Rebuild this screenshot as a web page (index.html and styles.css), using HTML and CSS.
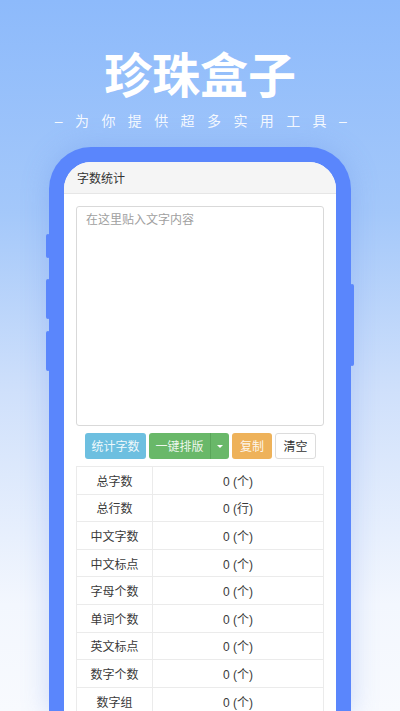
FILE: index.html
```html
<!DOCTYPE html>
<html lang="zh">
<head>
<meta charset="utf-8">
<link rel="stylesheet" href="styles.css">
</head>
<body>
<div class="page">
  <header class="hero">
    <h1 class="title">珍珠盒子</h1>
    <p class="subtitle"><span class="dash">–</span>为你提供超多实用工具<span class="dash">–</span></p>
  </header>
  <div class="phone">
    <span class="side-btn l1"></span>
    <span class="side-btn l2"></span>
    <span class="side-btn l3"></span>
    <span class="side-btn r1"></span>
    <div class="screen">
      <div class="appbar">字数统计</div>
      <div class="content">
        <div class="textbox">在这里贴入文字内容</div>
        <div class="btn-row">
          <div class="btn info">统计字数</div>
          <div class="btn-group">
            <div class="btn success main">一键排版</div>
            <div class="btn success caret-btn"><span class="caret"></span></div>
          </div>
          <div class="btn warning">复制</div>
          <div class="btn plain">清空</div>
        </div>
        <table class="stats">
          <tr><td class="k">总字数</td><td class="v">0 (个)</td></tr>
          <tr><td class="k">总行数</td><td class="v">0 (行)</td></tr>
          <tr><td class="k">中文字数</td><td class="v">0 (个)</td></tr>
          <tr><td class="k">中文标点</td><td class="v">0 (个)</td></tr>
          <tr><td class="k">字母个数</td><td class="v">0 (个)</td></tr>
          <tr><td class="k">单词个数</td><td class="v">0 (个)</td></tr>
          <tr><td class="k">英文标点</td><td class="v">0 (个)</td></tr>
          <tr><td class="k">数字个数</td><td class="v">0 (个)</td></tr>
          <tr><td class="k">数字组</td><td class="v">0 (个)</td></tr>
        </table>
      </div>
    </div>
  </div>
</div>
</body>
</html>
```
FILE: styles.css
```css
* { box-sizing: border-box; }
html, body { margin: 0; padding: 0; }
body {
  width: 400px;
  height: 711px;
  overflow: hidden;
  font-family: "Liberation Sans", "Noto Sans CJK SC", sans-serif;
  background: linear-gradient(180deg, #8dbafb 0%, #a4c8fa 30%, #cfe0fb 55%, #f3f7fe 85%, #f8fafe 100%);
}
.page {
  display: flex;
  flex-direction: column;
  align-items: center;
  height: 711px;
}
.hero {
  text-align: center;
  color: #fff;
  padding-top: 44px;
}
.title {
  margin: 0;
  font-family: "Noto Sans CJK SC", sans-serif;
  font-size: 48px;
  line-height: 56px;
  font-weight: 700;
}
.subtitle {
  margin: 9px 0 0 0;
  font-family: "Noto Sans CJK SC", sans-serif;
  font-size: 14px;
  line-height: 22px;
  letter-spacing: 12.4px;
  color: rgba(255,255,255,0.92);
  padding-left: 14px;
}
.dash { font-family: "Liberation Sans", sans-serif; }
.phone {
  position: relative;
  margin-top: 15px;
  width: 302px;
  flex: 1;
  background: #5a86fc;
  border-radius: 42px 42px 0 0;
  padding: 15px 15px 0 15px;
  box-shadow: 0 0 28px rgba(90, 134, 230, 0.28);
}
.side-btn {
  position: absolute;
  width: 4px;
  background: #5a86fc;
  border-radius: 2px;
}
.l1 { left: -3px; top: 87px; height: 24px; }
.l2 { left: -3px; top: 132px; height: 40px; }
.l3 { left: -3px; top: 184px; height: 40px; }
.r1 { right: -3px; top: 137px; height: 82px; }
.screen {
  background: #fff;
  height: 100%;
  border-radius: 27px 27px 0 0;
  overflow: hidden;
}
.appbar {
  height: 32px;
  background: #f5f5f5;
  border-bottom: 1px solid #e6e6e6;
  padding-left: 13px;
  font-family: "Noto Sans CJK SC", sans-serif;
  font-size: 12px;
  line-height: 31px;
  color: #333;
}
.content {
  padding: 12px 12px 0 12px;
}
.textbox {
  height: 220px;
  border: 1px solid #d9d9d9;
  border-radius: 3px;
  padding: 4px 9px;
  font-family: "Noto Sans CJK SC", sans-serif;
  font-size: 12px;
  line-height: 16px;
  color: #a0a0a0;
}
.btn-row {
  display: flex;
  justify-content: center;
  gap: 3px;
  margin-top: 7px;
  padding-left: 1px;
}
.btn {
  height: 26px;
  border-radius: 3px;
  font-family: "Noto Sans CJK SC", sans-serif;
  font-size: 12px;
  line-height: 26px;
  text-align: center;
  color: rgba(255,255,255,0.9);
}
.info { width: 61px; background: #6dbfe0; }
.btn-group { display: flex; }
.success { background: #69b869; }
.main { width: 62px; border-radius: 3px 0 0 3px; border-right: 1px solid #5aa65a; }
.caret-btn { width: 18px; border-radius: 0 3px 3px 0; display: flex; align-items: center; justify-content: center; }
.caret {
  width: 0; height: 0;
  border-left: 3px solid transparent;
  border-right: 3px solid transparent;
  border-top: 3px solid #fff;
}
.warning { width: 40px; background: #eeb25a; }
.plain { width: 41px; background: #fff; border: 1px solid #dcdcdc; color: #333; line-height: 24px; }
.stats {
  margin-top: 7px;
  width: 248px;
  border-collapse: collapse;
  font-size: 12px;
  color: #3a3a3a;
}
.stats td {
  border: 1px solid #ebebeb;
  height: 27.6px;
  padding: 0;
  text-align: center;
  vertical-align: middle;
}
.stats .k { width: 76px; font-family: "Noto Sans CJK SC", sans-serif; }
.stats .v { font-family: "Liberation Sans", "Noto Sans CJK SC", sans-serif; }
```
